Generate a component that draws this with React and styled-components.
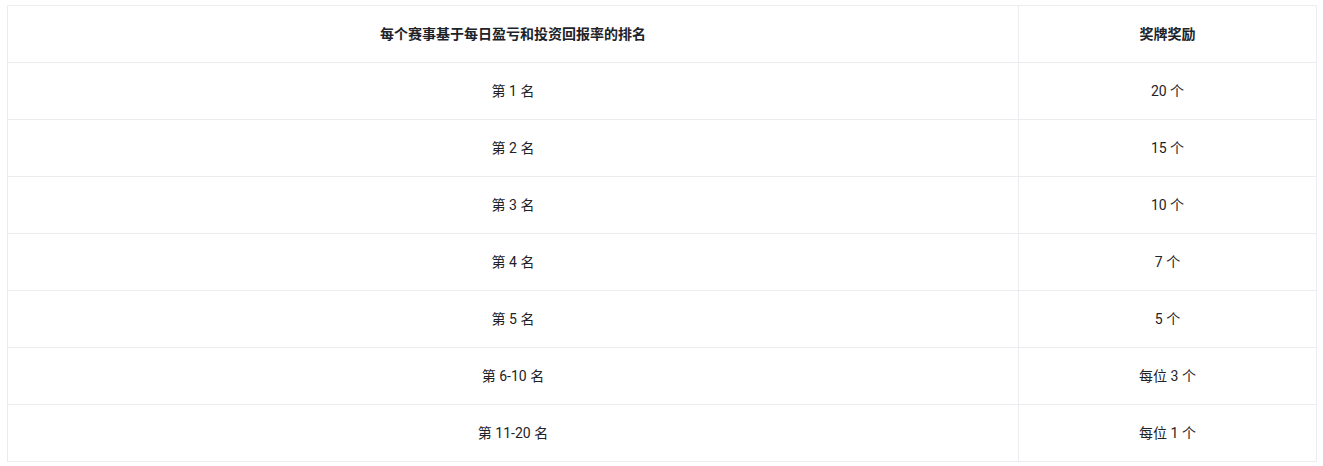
import React from "react";
import styled, { createGlobalStyle } from "styled-components";

const GlobalStyle = createGlobalStyle`
  html, body {
    margin: 0;
    padding: 0;
    background: #ffffff;
  }
  body {
    font-family: Roboto, "Noto Sans CJK SC", sans-serif;
    color: #1e2329;
  }
`;

const Wrap = styled.div`
  padding: 5px 7px;
`;

const Table = styled.table`
  width: 1310px;
  border-collapse: collapse;
  table-layout: fixed;
  font-size: 14px;
  line-height: 20px;
`;

const Cell = styled.td`
  height: 57px;
  padding: 0 16px;
  box-sizing: border-box;
  border: 1px solid #eaecef;
  text-align: center;
  vertical-align: middle;
  font-weight: ${(props) => (props.head ? 600 : 400)};
`;

const rows = [
  ["第 1 名", "20 个"],
  ["第 2 名", "15 个"],
  ["第 3 名", "10 个"],
  ["第 4 名", "7 个"],
  ["第 5 名", "5 个"],
  ["第 6-10 名", "每位 3 个"],
  ["第 11-20 名", "每位 1 个"],
];

const App = () => {
  return (
    <Wrap>
      <GlobalStyle />
      <Table>
        <colgroup>
          <col style={{ width: "1011px" }} />
          <col />
        </colgroup>
        <thead>
          <tr>
            <Cell as="th" head>
              每个赛事基于每日盈亏和投资回报率的排名
            </Cell>
            <Cell as="th" head>
              奖牌奖励
            </Cell>
          </tr>
        </thead>
        <tbody>
          {rows.map(([rank, reward]) => (
            <tr key={rank}>
              <Cell>{rank}</Cell>
              <Cell>{reward}</Cell>
            </tr>
          ))}
        </tbody>
      </Table>
    </Wrap>
  );
};

export default App;
